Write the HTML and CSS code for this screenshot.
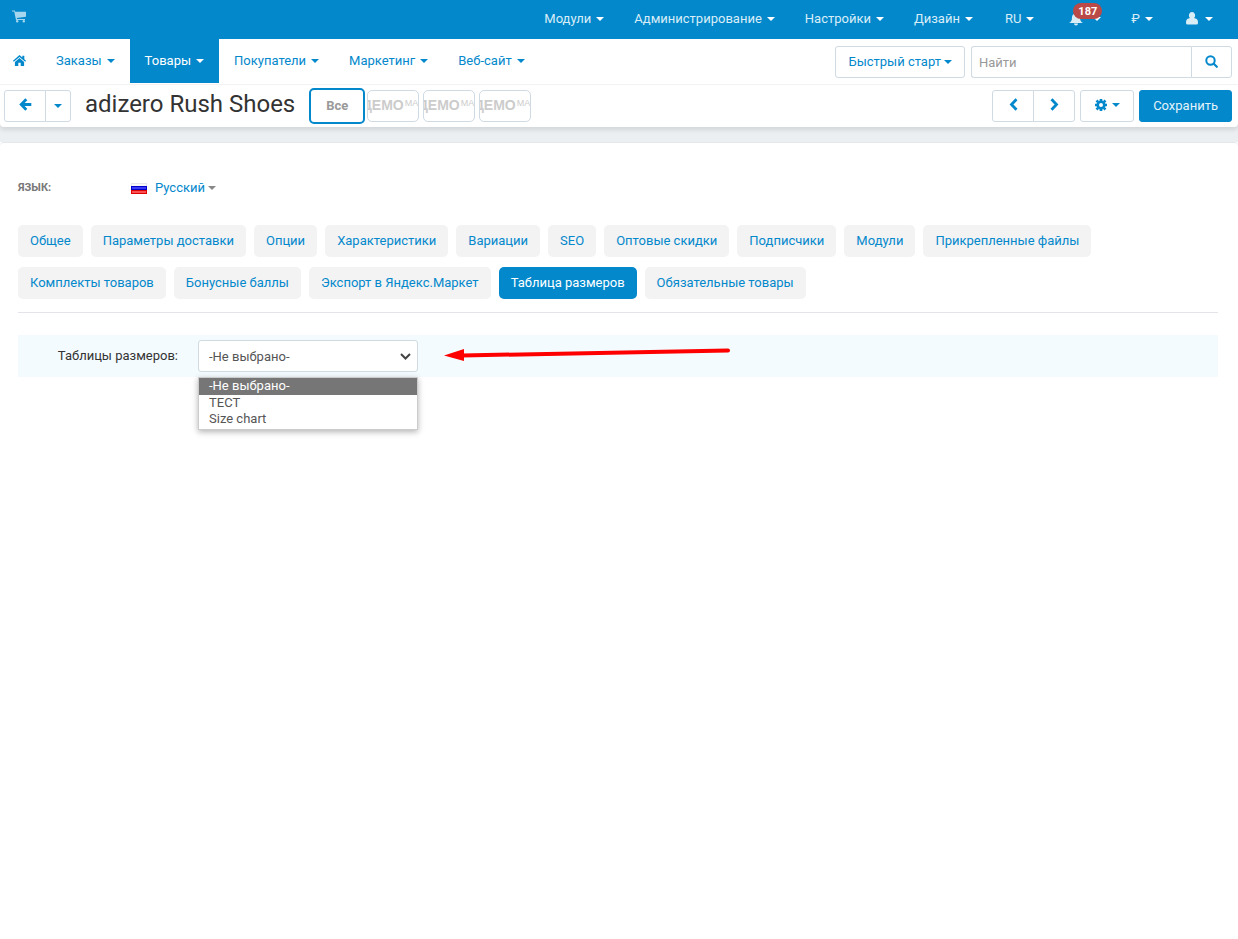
FILE: index.html
```html
<!DOCTYPE html>
<html lang="ru">
<head>
<meta charset="utf-8">
<title>adizero Rush Shoes</title>
<link rel="stylesheet" href="styles.css">
</head>
<body>
<header>
  <nav class="topbar" aria-label="Система">
    <a class="cart" href="#" aria-label="Магазин"><svg width="15" height="13" viewBox="0 0 15 13"><path d="M0 .5h2.800l.4 1.300H14v5L4.800 8l.2 1h8v1H4L2.200 1.500H0z"/><circle cx="5.200" cy="11.300" r="1.200"/><circle cx="11.800" cy="11.300" r="1.200"/></svg></a>
    <ul class="menu menu-top">
      <li><a href="#">Модули<i class="caret"></i></a></li>
      <li><a href="#">Администрирование<i class="caret"></i></a></li>
      <li><a href="#">Настройки<i class="caret"></i></a></li>
      <li><a href="#">Дизайн<i class="caret"></i></a></li>
      <li class="lang"><a href="#">RU<i class="caret"></i></a></li>
      <li class="bell"><a href="#" aria-label="Уведомления"><svg width="14" height="14" viewBox="0 0 14 14"><path d="M7 .5c.7 0 1 .4 1 1 2 .5 3 2 3 4 0 3 1 4.500 3 5.500H0c2-1 3-2.500 3-5.500 0-2 1-3.500 3-4 0-.6.3-1 1-1zM5 11.500h4a2 2 0 0 1-4 0z"/></svg><i class="caret"></i></a><span class="badge">187</span></li>
      <li><a href="#">₽<i class="caret"></i></a></li>
      <li class="user"><a href="#" aria-label="Профиль"><svg width="12" height="13" viewBox="0 0 12 13"><path d="M6 0a3 3.400 0 0 1 2.200 5.800Q8.600 6.300 9.500 6.400C11.500 6.600 12 8.500 12 11q0 1.500-1.500 1.500h-9Q0 12.500 0 11c0-2.500.5-4.400 2.500-4.600q.9-.1 1.300-.6A3 3.400 0 0 1 6 0z"/></svg><i class="caret"></i></a></li>
    </ul>
  </nav>

  <nav class="mainbar" aria-label="Основное меню">
    <ul class="menu menu-main">
      <li><a class="home" href="#" aria-label="Главная"><svg width="13" height="12" viewBox="0 0 13 12"><path d="M6.500 0 9.300 2.400V.8h2v3.400L13 5.800l-.8.900-5.700-4.800L.8 6.700 0 5.800z"/><path d="m6.500 3 4.600 3.900V11H7.700V7.800H5.300V11H1.900V6.900z"/></svg></a></li>
      <li><a href="#">Заказы<i class="caret"></i></a></li>
      <li class="active"><a href="#">Товары<i class="caret"></i></a></li>
      <li><a href="#">Покупатели<i class="caret"></i></a></li>
      <li><a href="#">Маркетинг<i class="caret"></i></a></li>
      <li><a href="#">Веб-сайт<i class="caret"></i></a></li>
    </ul>
    <button class="btn quick" type="button">Быстрый старт<i class="caret"></i></button>
    <form class="search" role="search">
      <input type="search" placeholder="Найти" aria-label="Найти">
      <button class="btn" type="button" aria-label="Искать"><svg width="13" height="13" viewBox="0 0 13 13"><circle cx="5.500" cy="5.500" r="4.200" fill="none" stroke="currentColor" stroke-width="2"/><path d="m8.800 8.800 3 3" stroke="currentColor" stroke-width="2.200" stroke-linecap="round"/></svg></button>
    </form>
  </nav>

  <div class="titlebar">
    <div class="group">
      <button class="btn wide" type="button" aria-label="Назад"><svg width="13" height="13" viewBox="0 0 13 13"><path d="M7.300 1.200 2.200 6.500l5.100 5.300M2.500 6.500H12.300" fill="none" stroke="currentColor" stroke-width="2.800"/></svg></button>
      <button class="btn slim" type="button" aria-label="Ещё"><i class="caret"></i></button>
    </div>
    <h1>adizero Rush Shoes</h1>
    <div class="stores">
      <button class="store all" type="button">Все</button>
      <button class="store" type="button"><span class="logo">ДЕМО<small>МА</small></span></button>
      <button class="store" type="button"><span class="logo">ДЕМО<small>МА</small></span></button>
      <button class="store" type="button"><span class="logo">ДЕМО<small>МА</small></span></button>
    </div>
    <div class="actions">
      <div class="group">
        <button class="btn wide" type="button" aria-label="Предыдущий"><svg width="9" height="13" viewBox="0 0 9 13"><path d="M7.500 1.200 2.500 6.500l5 5.300" fill="none" stroke="currentColor" stroke-width="2.800"/></svg></button>
        <button class="btn wide" type="button" aria-label="Следующий"><svg width="9" height="13" viewBox="0 0 9 13"><path d="m1.500 1.200 5 5.300-5 5.300" fill="none" stroke="currentColor" stroke-width="2.800"/></svg></button>
      </div>
      <button class="btn gear" type="button" aria-label="Действия"><svg width="12" height="12" viewBox="0 0 12 12"><circle cx="6" cy="6" r="3.300" fill="none" stroke="currentColor" stroke-width="2.600"/><path d="M6 0v2M6 10v2M0 6h2M10 6h2M1.500 1.500l1.700 1.700M8.800 8.800l1.700 1.700M1.500 10.500l1.700-1.700M8.800 3.200l1.700-1.700" stroke="currentColor" stroke-width="2.600"/></svg><i class="caret"></i></button>
      <button class="btn primary" type="button">Сохранить</button>
    </div>
  </div>
</header>

<main>
  <div class="language">
    <span class="language-label">Язык:</span>
    <a href="#"><svg width="16" height="11" viewBox="0 0 16 11"><path fill="#e6e6ea" d="M0 0h16v4H0z"/><path fill="#f8f8f8" d="M1 1h14v3H1z"/><path fill="#0000cd" d="M0 3h16v4H0z"/><path fill="#3b3bf5" d="M1 4h14v2H1z"/><path fill="#dc0000" d="M0 7h16v4H0z"/><path fill="#f85050" d="M1 8h14v2H1z"/></svg>Русский<i class="caret"></i></a>
  </div>

  <ul class="tabs">
    <li><a href="#">Общее</a></li>
    <li><a href="#">Параметры доставки</a></li>
    <li><a href="#">Опции</a></li>
    <li><a href="#">Характеристики</a></li>
    <li><a href="#">Вариации</a></li>
    <li><a href="#">SEO</a></li>
    <li><a href="#">Оптовые скидки</a></li>
    <li><a href="#">Подписчики</a></li>
    <li><a href="#">Модули</a></li>
    <li><a href="#">Прикрепленные файлы</a></li>
    <li><a href="#">Комплекты товаров</a></li>
    <li><a href="#">Бонусные баллы</a></li>
    <li><a href="#">Экспорт в Яндекс.Маркет</a></li>
    <li class="active"><a href="#">Таблица размеров</a></li>
    <li><a href="#">Обязательные товары</a></li>
  </ul>

  <div class="field">
    <label for="size-chart">Таблицы размеров:</label>
    <div class="picker">
      <select id="size-chart">
        <option>-Не выбрано-</option>
        <option>ТЕСТ</option>
        <option>Size chart</option>
      </select>
      <svg class="chevron" width="11" height="7" viewBox="0 0 11 7"><path d="m1 1 4.500 4.500L10 1" fill="none" stroke="#444" stroke-width="2"/></svg>
      <ul class="options" role="listbox" aria-label="Таблицы размеров">
        <li role="option" aria-selected="true">-Не выбрано-</li>
        <li role="option">ТЕСТ</li>
        <li role="option">Size chart</li>
      </ul>
      <svg class="pointer" width="288" height="16" viewBox="0 0 288 16"><path d="M18 9.500 284 4.500" stroke="#f00" stroke-width="4" stroke-linecap="round"/><path fill="#f00" d="M0 9.500 20 3v12z"/></svg>
    </div>
  </div>
</main>
</body>
</html>
```
FILE: styles.css
```css
* {
  box-sizing: border-box;
}

body {
  min-height: 100vh;
  margin: 0;
  background: #fff;
  color: #333;
  font: 13px/20px Roboto, "Open Sans", sans-serif;
}

a {
  color: #0388cc;
  text-decoration: none;
}

ul {
  margin: 0;
  padding: 0;
  list-style: none;
}

button,
input,
select {
  font: inherit;
}

svg {
  display: block;
  flex: none;
  fill: currentColor;
}

.caret {
  flex: none;
  width: 0;
  height: 0;
  border: 4px solid transparent;
  border-top-color: currentColor;
  border-bottom: 0;
}

/* Navigation */
header {
  padding-bottom: 15px;
  background: #ebeff2;
}

.topbar {
  display: flex;
  justify-content: space-between;
  height: 39px;
  padding: 0 10px 0 12px;
  background: #0388cc;
}

.cart {
  padding-top: 10px;
  color: #a5d6ee;
}

.menu {
  display: flex;
}

.menu a {
  display: flex;
  align-items: center;
  gap: 5px;
  height: 100%;
  padding: 0 15px;
}

.menu-top a {
  padding-bottom: 2px;
  color: #d9edf7;
}

.menu-top .caret {
  color: #fff;
}

.menu-top .lang a {
  padding-left: 17px;
}

.menu-top .user a {
  gap: 7px;
  padding-left: 18px;
}

.bell {
  position: relative;
}

.menu-top .bell a {
  gap: 10px;
  padding-left: 20px;
}

.badge {
  position: absolute;
  top: 3px;
  left: 24px;
  padding: 1px 5px 0;
  border-radius: 8px;
  background: #b94a48;
  color: #fff;
  font-size: 11px;
  font-weight: 700;
  line-height: 15px;
}

.mainbar {
  display: flex;
  align-items: center;
  height: 46px;
  padding-right: 6px;
  border-bottom: 1px solid #f4f4f4;
  background: #fff;
}

.menu-main {
  align-self: flex-start;
  height: 44px;
  margin-right: auto;
}

.menu-main .home {
  padding-left: 13px;
}

.menu-main .active a {
  background: #0388cc;
  color: #fff;
}

/* Buttons */
.btn {
  display: flex;
  align-items: center;
  justify-content: center;
  height: 32px;
  padding: 0 12px;
  border: 1px solid #d0dae2;
  border-radius: 3px;
  background: #fff;
  color: #0388cc;
}

.quick {
  gap: 3px;
  margin-right: 6px;
}

.search {
  display: flex;
  width: 261px;
}

.search input {
  flex: 1;
  min-width: 0;
  height: 32px;
  padding: 1px 7px 0;
  border: 1px solid #d0dae2;
  border-right: 0;
  border-radius: 3px 0 0 3px;
  outline: 0;
  appearance: none;
}

.search input::placeholder {
  color: #999;
}

.search .btn {
  width: 41px;
  border-radius: 0 3px 3px 0;
}

.group {
  display: flex;
}

.group .btn:first-child {
  border-radius: 3px 0 0 3px;
}

.group .btn:last-child {
  margin-left: -1px;
  border-radius: 0 3px 3px 0;
}

.btn.wide {
  width: 42px;
  padding-bottom: 3px;
}

.slim {
  width: 26px;
  padding: 0;
}

.btn.gear {
  gap: 5px;
  width: 54px;
  padding-bottom: 2px;
}

.primary {
  padding: 0 13px;
  border-color: #0388cc;
  background: #0388cc;
  color: #e3f3fa;
}

/* Title row */
.titlebar {
  display: flex;
  align-items: center;
  height: 42px;
  padding: 0 6px 0 4px;
  border-radius: 0 0 4px 4px;
  background: #fff;
  box-shadow: 0 3px 4px rgba(0, 0, 0, 0.1);
}

h1 {
  margin: 0 14px;
  padding-bottom: 4px;
  font-size: 24px;
  font-weight: 400;
  line-height: 32px;
  white-space: nowrap;
}

.stores {
  display: flex;
  align-items: center;
  gap: 4px;
}

.store {
  display: flex;
  align-items: center;
  justify-content: flex-end;
  width: 52px;
  height: 32px;
  padding: 0 0 2px;
  overflow: hidden;
  border: 1px solid #d0dae2;
  border-radius: 5px;
  background: #fff;
  color: #ccc;
  font-weight: 700;
}

.store.all {
  justify-content: center;
  width: 56px;
  height: 36px;
  margin-right: -2px;
  padding: 0;
  border: 2px solid #0388cc;
  color: #999;
}

.logo {
  display: flex;
  flex: none;
  font: 700 14px/20px "Liberation Sans", Arial, sans-serif;
}

.logo small {
  margin-left: 1px;
  font-size: 9px;
  font-weight: 400;
  line-height: 16px;
}

.actions {
  display: flex;
  gap: 5px;
  margin-left: auto;
}

/* Content */
main {
  padding: 35px 20px 20px 18px;
  border-top: 1px solid #e4e8ec;
  border-radius: 4px 4px 0 0;
}

.language {
  display: flex;
  align-items: center;
}

.language-label {
  width: 113px;
  color: #777;
  font-size: 11px;
  font-weight: 700;
  text-transform: uppercase;
}

.language a {
  display: flex;
  align-items: center;
}

.language svg {
  margin-right: 8px;
}

.language .caret {
  margin-left: 3px;
  color: #888;
}

.tabs {
  display: flex;
  flex-wrap: wrap;
  gap: 10px 8px;
  margin-top: 27px;
  padding-bottom: 13px;
  border-bottom: 1px solid #e2e4e9;
}

.tabs a {
  display: block;
  padding: 6px 12px;
  border-radius: 5px;
  background: #f3f3f3;
}

.tabs .active a {
  background: #0388cc;
  color: #fff;
}

.field {
  display: flex;
  align-items: center;
  margin-top: 22px;
  padding: 5px 0;
  background: #f3fbff;
}

.field label {
  width: 160px;
  margin-right: 20px;
  text-align: right;
}

.picker {
  position: relative;
  width: 220px;
}

.picker select {
  display: block;
  width: 100%;
  height: 32px;
  padding: 2px 10px 0;
  border: 1px solid #d0dae2;
  border-radius: 3px;
  background: #fff;
  color: #555;
  appearance: none;
}

.chevron {
  position: absolute;
  top: 13px;
  right: 7px;
}

.options {
  position: absolute;
  top: 37px;
  left: 0;
  width: 100%;
  padding-bottom: 2px;
  border: 1px solid #ccc;
  background: #fff;
  box-shadow: 0 2px 6px rgba(0, 0, 0, 0.3);
  color: #555;
  line-height: 16px;
}

.options li {
  padding: 0 10px;
}

.options [aria-selected] {
  padding-bottom: 1px;
  background: #767676;
  color: #fff;
}

.pointer {
  position: absolute;
  top: 6px;
  left: 246px;
}
```
